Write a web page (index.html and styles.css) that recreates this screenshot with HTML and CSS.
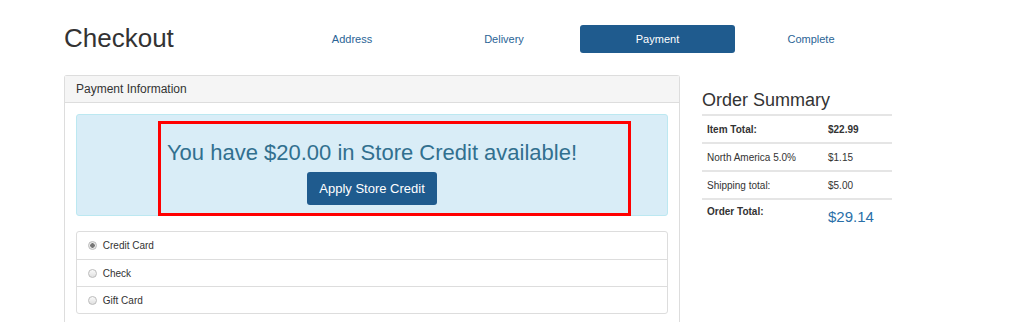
FILE: index.html
```html
<!DOCTYPE html>
<html lang="en">
<head>
  <meta charset="UTF-8" />
  <title>Checkout</title>
  <link rel="stylesheet" href="styles.css">
</head>
<body>

  <div class="page">
    <div class="top-row">
      <h1 class="page-title">Checkout</h1>
      <ul class="steps">
        <li class="step">Address</li>
        <li class="step">Delivery</li>
        <li class="step active">Payment</li>
        <li class="step">Complete</li>
      </ul>
    </div>

    <div class="content">
      <div class="panel">
        <div class="panel-heading">Payment Information</div>
        <div class="panel-body">
          <div class="credit-alert">
            <p class="credit-text">You have $20.00 in Store Credit available!</p>
            <button class="credit-btn" type="button">Apply Store Credit</button>
            <!-- highlight drawn over the alert -->
            <div class="highlight"></div>
          </div>

          <ul class="methods">
            <li><label><input type="radio" name="method" checked /> Credit Card</label></li>
            <li><label><input type="radio" name="method" /> Check</label></li>
            <li><label><input type="radio" name="method" /> Gift Card</label></li>
          </ul>
        </div>
      </div>

      <div class="summary">
        <h3>Order Summary</h3>
        <table class="summary-table">
          <tr class="strong"><td>Item Total:</td><td>$22.99</td></tr>
          <tr><td>North America 5.0%</td><td>$1.15</td></tr>
          <tr><td>Shipping total:</td><td>$5.00</td></tr>
          <tr class="total"><td>Order Total:</td><td><span class="total-price">$29.14</span></td></tr>
        </table>
      </div>
    </div>
  </div>

</body>
</html>
```

FILE: styles.css
```css
body {
  margin: 0;
  font-family: 'Liberation Sans', Arial, sans-serif;
  color: #333;
  background: #fff;
}

.page {
  padding: 0 0 0 64px;
  width: 828px;
}

.top-row {
  display: flex;
  align-items: center;
  height: 75px;
}

.page-title {
  margin: 0;
  width: 212px;
  font-size: 26px;
  font-weight: normal;
  line-height: 1;
}

.steps {
  display: flex;
  list-style: none;
  margin: 0;
  padding: 0;
  position: relative;
  top: 1px;
}

.step {
  width: 152px;
  height: 28px;
  line-height: 28px;
  text-align: center;
  font-size: 11px;
  color: #2a6496;
  border-radius: 3px;
}

.step.active {
  width: 155px;
  background: #1f5b8e;
  color: #fff;
}

.content {
  display: flex;
  align-items: flex-start;
  gap: 22px;
}

.panel {
  width: 614px;
  border: 1px solid #ddd;
  border-bottom: none;
  border-radius: 3px 3px 0 0;
}

.panel-heading {
  background: #f5f5f5;
  border-bottom: 1px solid #ddd;
  height: 26px;
  line-height: 26px;
  padding: 0 11px;
  font-size: 12px;
}

.panel-body {
  padding: 11px 11px 8px;
}

.credit-alert {
  position: relative;
  background: #d9edf7;
  border: 1px solid #bce8f1;
  border-radius: 3px;
  height: 100px;
  text-align: center;
  color: #31708f;
}

.credit-text {
  margin: 0;
  padding-top: 25px;
  font-size: 22px;
  line-height: 26px;
}

.credit-btn {
  margin-top: 6px;
  width: 130px;
  height: 33px;
  border: none;
  border-radius: 3px;
  background: #1f5b8e;
  color: #fff;
  font-family: inherit;
  font-size: 13px;
}

.highlight {
  position: absolute;
  left: 81px;
  top: 6px;
  width: 467px;
  height: 89px;
  border: 3px solid #f00;
}

.methods {
  list-style: none;
  margin: 15px 0 0;
  padding: 0;
  border: 1px solid #ddd;
  border-radius: 3px;
}

.methods li {
  height: 26px;
  line-height: 27px;
  padding: 0 10px;
  font-size: 10px;
  border-top: 1px solid #ddd;
}

.methods li:first-child {
  height: 27px;
  border-top: none;
}

.methods input {
  appearance: none;
  -webkit-appearance: none;
  width: 9px;
  height: 9px;
  margin: 0 3px 0 1px;
  vertical-align: -1px;
  border: 1px solid #bbb;
  border-radius: 50%;
  background: linear-gradient(#fafafa, #e0e0e0);
  box-sizing: border-box;
}

.methods input:checked {
  background: radial-gradient(circle, #777 0, #777 2px, #e8e8e8 2.5px);
}

.summary {
  width: 190px;
}

.summary h3 {
  margin: 14px 0 3px;
  font-size: 18px;
  font-weight: normal;
  line-height: 22px;
}

.summary-table {
  width: 100%;
  border-collapse: collapse;
  font-size: 10px;
}

.summary-table td {
  border-top: 2px solid #e5e5e5;
  height: 26px;
  padding: 0 5px;
}

.summary-table td:first-child {
  width: 111px;
}

.summary-table tr.strong td,
.summary-table tr.total td:first-child {
  font-weight: bold;
}

.summary-table tr.total td {
  vertical-align: top;
  padding-top: 6px;
}

.total-price {
  color: #2a6fa8;
  font-size: 15px;
  position: relative;
  top: 2px;
}
```
